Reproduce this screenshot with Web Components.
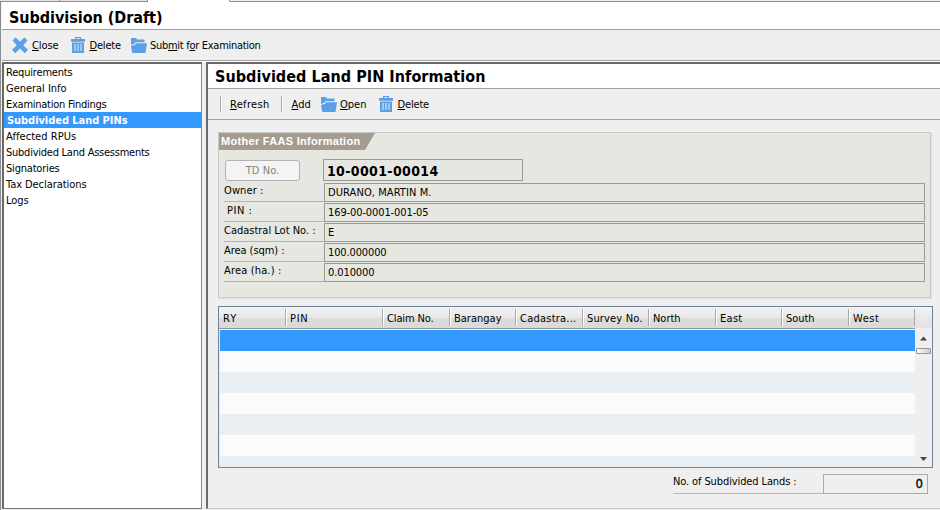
<!DOCTYPE html>
<html lang="en">
<head>
<meta charset="utf-8">
<title>Subdivision (Draft)</title>
<style>
html,body{margin:0;padding:0;width:940px;height:510px;overflow:hidden;background:#efefef}
body{font:11px "DejaVu Sans Condensed","DejaVu Sans",sans-serif;font-stretch:condensed;color:#000}
</style>
</head>
<body>
<app-window>
  <page-title slot="title" w="153" style="padding-left:7px;height:27px;--base:31px">Subdivision (Draft)</page-title>
  <tool-bar slot="tools" style="height:31px;padding-left:9px">
    <tool-button icon="close" w="26"><u>C</u>lose</tool-button>
    <tool-button icon="trash" w="31" style="margin-left:11px"><u>D</u>elete</tool-button>
    <tool-button icon="folder" w="110" style="margin-left:9px">Sub<u>m</u>it f<u>o</u>r Examination</tool-button>
  </tool-bar>
  <nav-list slot="nav">
    <nav-item w="66">Requirements</nav-item>
    <nav-item w="60">General Info</nav-item>
    <nav-item w="100">Examination Findings</nav-item>
    <nav-item w="120" selected>Subdivided Land PINs</nav-item>
    <nav-item w="70">Affected RPUs</nav-item>
    <nav-item w="143">Subdivided Land Assessments</nav-item>
    <nav-item w="53">Signatories</nav-item>
    <nav-item w="80">Tax Declarations</nav-item>
    <nav-item w="22">Logs</nav-item>
  </nav-list>
  <detail-pane>
    <page-title slot="title" w="270" style="padding-left:7px;height:24px;--base:25px">Subdivided Land PIN Information</page-title>
    <tool-bar slot="tools" style="height:31px;padding-left:12px">
      <tool-sep></tool-sep>
      <tool-button w="39" style="margin-left:8px"><u>R</u>efresh</tool-button>
      <tool-sep style="margin-left:11px"></tool-sep>
      <tool-button w="19" style="margin-left:9px"><u>A</u>dd</tool-button>
      <tool-button icon="folder" w="26" style="margin-left:9px"><u>O</u>pen</tool-button>
      <tool-button icon="trash" w="31" style="margin-left:11px"><u>D</u>elete</tool-button>
    </tool-bar>
    <info-panel></info-panel>
    <data-table></data-table>
    <total-row></total-row>
  </detail-pane>
</app-window>
<script>
const define=(name,html,init)=>customElements.define(name,class extends HTMLElement{
  constructor(){super();this.attachShadow({mode:'open'});}
  connectedCallback(){
    if(this.ready)return;this.ready=true;
    this.shadowRoot.innerHTML=typeof html==='function'?html(this):html;
    if(init)init(this);
  }
});

const icons={
close:'<svg width="18" height="17" viewBox="0 0 18 17"><path fill="#5b9fe6" d="M1.500 3.600 4.600.6 9 4.800 13.400.6l3.100 3L12.200 8.300l4.900 4.500-3.300 3.400L9 11.600 4.200 16.200.9 12.800 5.800 8.300Z"/></svg>',
trash:'<svg width="17" height="17" viewBox="-1 0 17 17"><path fill="#5b9fe6" fill-rule="evenodd" d="M4 0h6v2h4V4.800H0V2H4ZM5.500 1v1h3V1ZM1 5.500h12V16H1ZM3.500 7V14h1V7ZM6.500 7V14h1V7ZM9.500 7V14h1V7Z"/></svg>',
folder:'<svg width="17" height="17" viewBox="-1 0 17 17"><path fill="#5b9fe6" d="M0 1h5l1 1.500H13.500V5.200H4.500L3 7 0 8ZM4.700 6.200H16l-1.500 9.800H1.200L0 9l3-1h1Z"/></svg>'};

/* Text run spread evenly over the width given in its w attribute */
define('fit-text','<style>:host{display:inline-block;white-space:pre;flex:none}</style><span><slot></slot></span>',el=>{
  const s=el.shadowRoot.querySelector('span'),w=+el.getAttribute('w');
  const n=s.getBoundingClientRect().width,c=el.textContent.length;
  if(w&&n)s.style.letterSpacing=((w+.5-n)/c).toFixed(3)+'px';
});

define('page-title',el=>`<style>
:host{display:block;box-sizing:border-box;background:#fff;font-size:16px;font-weight:bold;line-height:var(--base);overflow:hidden}</style>
<fit-text w="${el.getAttribute('w')}">${el.innerHTML}</fit-text>`);

define('tool-bar',`<style>:host{display:flex;align-items:center;box-sizing:border-box;background:#efefef;border-bottom:1px solid #a0a0a0}</style><slot></slot>`);
define('tool-sep',`<style>:host{display:block;width:1px;height:16px;background:#aaa;border-right:1px solid #fff}</style>`);
define('tool-button',el=>`<style>
:host{display:flex;align-items:center;height:20px}svg{display:block;margin:0 3px 0 0}u{text-underline-offset:1px;text-decoration-thickness:1px}</style>
${icons[el.getAttribute('icon')]||''}<fit-text w="${el.getAttribute('w')}">${el.innerHTML}</fit-text>`);

define('nav-list',`<style>
:host{display:block;box-sizing:border-box;width:200px;height:447px;background:#fff;border:1px solid #828790;border-top:2px solid #696969;border-left:2px solid #696969;border-bottom:1px solid #77777f}</style><slot></slot>`);
define('nav-item',el=>`<style>
:host{display:block;height:16px;line-height:17px;padding-left:2px;box-sizing:border-box}
:host([selected]){background:#3399ff;color:#fff;font-weight:bold;padding-left:3px}</style>
<fit-text w="${el.getAttribute('w')}">${el.innerHTML}</fit-text>`);

define('app-window',`<style>
:host{display:flex;flex-direction:column;width:940px;height:510px;background:#efefef}
.tabs{display:flex;height:2px;flex:none}
.tabs i{box-sizing:border-box;height:2px;background:#e4e4e4;border-bottom:1px solid #8c8e94}
.frame{flex:1;display:flex;flex-direction:column;border-left:1px solid #8c8e94;padding-left:1px}
.rule{height:1px;background:#a0a0a0;flex:none}
.hi{height:1px;background:#fff;flex:none}
.cols{display:flex}
</style>
<div class="tabs"><i style="width:60px;border-right:1px solid #8c8e94"></i><i style="width:88px;border-right:1px solid #8c8e94"></i><i style="width:82px;background:#fff;border-color:#fff;border-right:1px solid #8c8e94"></i><i style="flex:1;background:#efefef"></i></div>
<div class="frame"><slot name="title"></slot><div class="rule"></div><slot name="tools"></slot><div class="hi"></div>
<div class="cols"><slot name="nav"></slot><slot></slot></div></div>`);

define('detail-pane',`<style>
:host{display:block;box-sizing:border-box;margin-left:4px;width:734px;height:447px;background:#efefef;border-left:2px solid #696969;border-top:2px solid #696969;border-bottom:1px solid #c8c8c8;overflow:hidden}
.rule{height:1px;background:#a0a0a0}</style>
<slot name="title"></slot><div class="rule"></div><slot name="tools"></slot><slot></slot>`);

define('field-row',el=>{const a=k=>el.getAttribute(k);return `<style>
:host{display:flex;height:20px}
.label{box-sizing:border-box;width:100px;height:19px;border-bottom:1px solid #b4b5b1;line-height:15px}
.value{box-sizing:border-box;width:601px;height:19px;border:1px solid #999b98;line-height:18px;padding-left:3px}</style>
<div class="label" style="padding-left:${a('lp')||0}px"><fit-text w="${a('lw')}">${a('label')}</fit-text></div><div class="value"><fit-text w="${a('vw')}">${a('value')}</fit-text></div>`});

define('info-panel',`<style>
:host{display:block;box-sizing:border-box;width:713px;height:166px;margin:12px 0 0 10px;background:#e6e7e1;border:1px solid #c8c9c6;box-shadow:1px 1px 1px #e2e2e2}
.head{height:17px;width:156px;background:#a69b90;clip-path:polygon(0 0,100% 0,146px 100%,0 100%);color:#fff;font:bold 11px/17px "Liberation Sans",Arial,sans-serif;padding-left:2px;box-sizing:border-box}
.top{display:flex;padding:9px 0 0 6px;height:23px;align-items:flex-start}
.btn{box-sizing:border-box;width:75px;height:21px;margin-top:1px;border:1px solid #b0b2b5;border-radius:3px;background:#f4f4f4;color:#838383;font:11px "DejaVu Sans Condensed","DejaVu Sans",sans-serif;font-stretch:condensed;padding:0}
.no{box-sizing:border-box;width:200px;height:22px;margin-left:23px;border:1px solid #999b98;padding-left:3px;font-size:14px;font-weight:bold;line-height:23px}
.rows{padding:1px 0 0 5px}
</style>
<div class="head"><fit-text w="139">Mother FAAS Information</fit-text></div>
<div class="top"><button class="btn"><fit-text w="33">TD No.</fit-text></button><div class="no"><fit-text w="111">10-0001-00014</fit-text></div></div>
<div class="rows">
<field-row label="Owner :" lw="39" value="DURANO, MARTIN M." vw="103"></field-row>
<field-row label="PIN :" lp="3" lw="25" value="169-00-0001-001-05" vw="100"></field-row>
<field-row label="Cadastral Lot No. :" lw="91" value="E" vw="7"></field-row>
<field-row label="Area (sqm) :" lw="60" value="100.000000" vw="58"></field-row>
<field-row label="Area (ha.) :" lw="57" value="0.010000" vw="46"></field-row>
</div>`);

const cols=[['RY',67,14],['PIN',97,18],['Claim No.',67,46],['Barangay',66,47],['Cadastra...',67,56],['Survey No.',66,55],['North',67,27],['East',66,22],['South',67,28],['West',66,26]];
define('data-table',`<style>
:host{display:flex;box-sizing:border-box;width:715px;height:162px;margin:8px 0 0 10px;border:1px solid #718499;background:#fbfbfb}
.main{width:696px;flex:none;display:flex;flex-direction:column}
.head{display:flex;box-sizing:border-box;height:22px;padding-top:2px;background:linear-gradient(#f2f2f2,#e8e8e8 50%,#dcdcdc 51%,#dadada);border-bottom:1px solid #8a97a4}
.head div{box-sizing:border-box;height:17px;line-height:20px;padding-left:4px;border-right:1px solid #a8a8a8;box-shadow:1px 0 #fff;overflow:hidden;flex:none}
.rows{margin-top:1px;border-left:1px solid #e3e6ea;flex:1;overflow:hidden}
.rows div{height:21px}.rows div:nth-child(odd){background:#eaeff3}.rows .sel{background:#3399ff!important}
.scroll{width:17px;background:#efefef;display:flex;flex-direction:column;align-items:center}
.corner{width:100%;height:21px;flex:none;background:linear-gradient(#f4f4f4,#e9e9e9 50%,#e2e2e2)}
.thumb{box-sizing:border-box;width:15px;height:6px;border:1px solid #949698;border-radius:1px;background:linear-gradient(90deg,#fafafa,#e4e4e4 50%,#ccc)}
svg{display:block}
</style>
<div class="main"><div class="head">${cols.map(c=>`<div style="width:${c[1]}px"><fit-text w="${c[2]}">${c[0]}</fit-text></div>`).join('')}</div>
<div class="rows"><div class="sel"></div><div></div><div></div><div></div><div></div><div></div><div></div></div></div>
<div class="scroll"><div class="corner"></div><svg width="7" height="20"><path d="M0 12.500 3.500 8.500 7 12.500Z" fill="#444"/></svg><div class="thumb"></div><svg style="margin-top:auto" width="7" height="11"><path d="M0 1 7 1 3.500 5Z" fill="#444"/></svg></div>`);

define('total-row',`<style>
:host{display:flex;margin:6px 0 0 465px}
.label{box-sizing:border-box;width:150px;height:20px;border-bottom:1px solid #b9b9b9;line-height:16px}
.value{box-sizing:border-box;width:105px;height:20px;border:1px solid #a8aaac;text-align:right;font-size:13px;line-height:18px;padding-right:3px;-webkit-text-stroke:.3px #000}
</style><div class="label"><fit-text w="123">No. of Subdivided Lands :</fit-text></div><div class="value"><fit-text w="8">0</fit-text></div>`);
</script>
</body>
</html>
